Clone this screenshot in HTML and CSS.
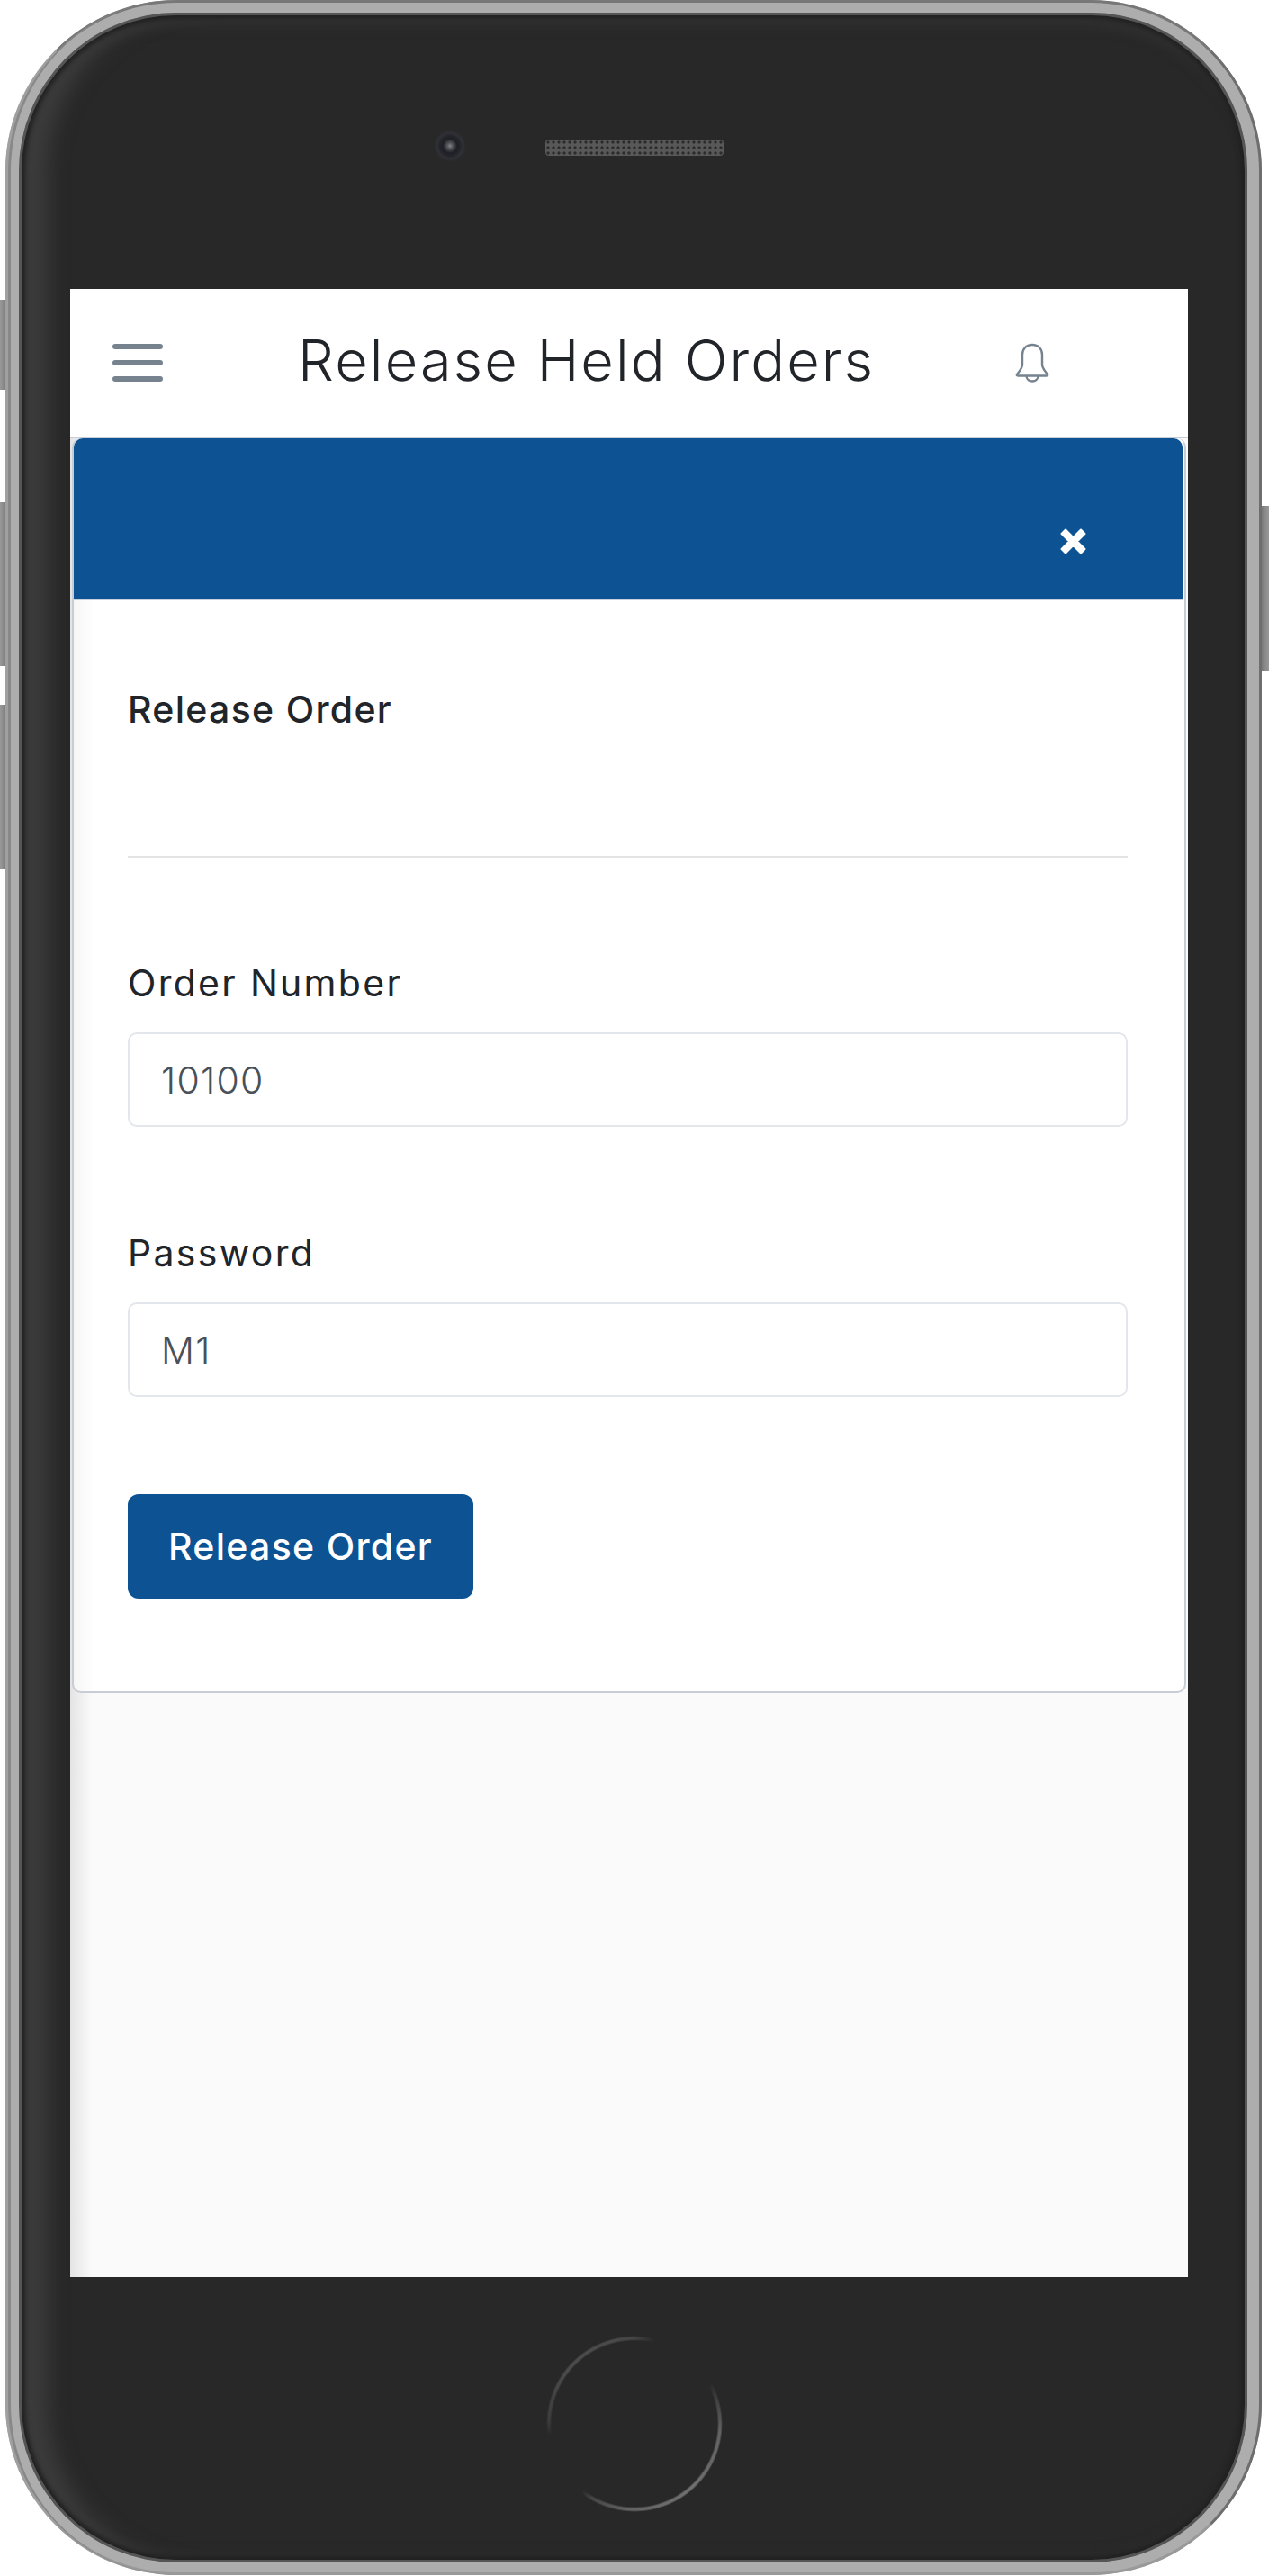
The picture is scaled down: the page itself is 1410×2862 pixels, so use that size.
FILE: index.html
```html
<!DOCTYPE html>
<html lang="en">

<head>
    <meta charset="UTF-8">
    <meta name="viewport" content="width=device-width, initial-scale=1.0">
    <title>Release Held Orders</title>
    <link rel="stylesheet" href="styles.css">
</head>

<body>
    <div class="phone">
        <span class="side-btn btn-a"></span>
        <span class="side-btn btn-b"></span>
        <span class="side-btn btn-c"></span>
        <span class="side-btn btn-d"></span>

        <div class="bezel">
            <div class="earpiece">
                <span class="camera"></span>
                <span class="speaker"></span>
            </div>

            <div class="screen">
                <header class="topbar">
                    <div class="menu-icon">
                        <span></span>
                        <span></span>
                        <span></span>
                    </div>
                    <h1>Release Held Orders</h1>
                    <svg class="bell" viewBox="0 0 38 44" width="38" height="44" fill="none" stroke="#76838f" stroke-width="2.4" stroke-linejoin="round">
                        <path d="M19 2c-7 0-11 5-11 11v11c0 4-3 7-6 11-.6 1 0 1.500 1 1.500h32c1 0 1.600-.5 1-1.500-3-4-6-7-6-11V13c0-6-4-11-11-11z" />
                        <path d="M12.500 36.500c0 3.800 2.800 6 6.500 6s6.500-2.200 6.500-6" />
                    </svg>
                </header>

                <div class="card">
                    <div class="card-head">
                        <svg class="close" viewBox="0 0 29 29" width="29" height="29">
                            <path d="M6 1.500L14.500 10L23 1.500L27.500 6L19 14.500L27.500 23L23 27.500L14.500 19L6 27.500L1.500 23L10 14.500L1.500 6Z" fill="#fff" stroke="#fff" stroke-width="2" stroke-linejoin="round" />
                        </svg>
                    </div>
                    <div class="card-body">
                        <h2>Release Order</h2>
                        <hr>
                        <form>
                            <label for="orderNumber">Order Number</label>
                            <input type="text" id="orderNumber" value="10100">
                            <label for="password" class="second">Password</label>
                            <input type="text" id="password" value="M1">
                            <button type="button">Release Order</button>
                        </form>
                    </div>
                </div>
            </div>

            <div class="home-btn"></div>
        </div>
    </div>
</body>

</html>
```

FILE: styles.css
```css
html,
body {
    margin: 0;
    background-color: #fff;
}

body {
    font-family: 'Inter', 'Open Sans', sans-serif;
    color: #212529;
}

.phone {
    position: relative;
    width: 1410px;
    height: 2862px;
    padding: 0 8px 1px 6px;
    box-sizing: border-box;
}

.bezel {
    position: relative;
    height: 100%;
    box-sizing: border-box;
    display: flex;
    flex-direction: column;
    align-items: flex-start;
    background-color: #282828;
    border-style: solid;
    border-color: #adadad;
    border-width: 14px 16px 14px 15px;
    border-radius: 190px;
    box-shadow:
        inset 0 0 0 3px #555,
        inset 0 0 5px 7px #212121,
        inset 42px 0 22px -10px #3c3c3c,
        inset 0 22px 14px -8px #343434,
        inset 0 -18px 12px -8px #2f2f2f;
}

/* outer edge of the metal frame */
.bezel::before {
    content: "";
    position: absolute;
    top: -14px;
    right: -16px;
    bottom: -14px;
    left: -15px;
    border-style: solid;
    border-width: 3px;
    border-color: #777 #6e6e6e #999 #a0a0a0;
    border-radius: 190px;
    pointer-events: none;
}

.bezel::after {
    content: "";
    position: absolute;
    top: -14px;
    right: -16px;
    bottom: -14px;
    left: -12px;
    border-left: 3px solid #888;
    border-radius: 190px;
    pointer-events: none;
}

.earpiece {
    height: 307px;
    flex-shrink: 0;
    position: relative;
    width: 100%;
}

.camera {
    position: absolute;
    left: 461px;
    top: 130px;
    width: 36px;
    height: 36px;
    border-radius: 50%;
    background: radial-gradient(circle, #85858d 0, #55555c 3px, #1e1e24 8px, #26262d 12px, #303037 14px, #282828 18px);
}

.speaker {
    position: absolute;
    left: 585px;
    top: 141px;
    width: 198px;
    height: 18px;
    border-radius: 4px;
    background-color: #585858;
    background-image: radial-gradient(#2c2c2c 35%, transparent 40%);
    background-size: 6px 6px;
}

.screen {
    width: 1242px;
    height: 2209px;
    flex-shrink: 0;
    margin-left: 57px;
    background: linear-gradient(to right, #e4e4e4, #fafafa 24px);
    z-index: 1;
}

.topbar {
    height: 166px;
    display: flex;
    align-items: center;
    background-color: #fff;
    box-sizing: border-box;
    padding: 0 0 0 47px;
    border-bottom: 2px solid #c8ccd4;
}

.menu-icon {
    width: 56px;
    display: flex;
    flex-direction: column;
    gap: 12px;
}

.menu-icon span {
    display: block;
    height: 6px;
    border-radius: 3px;
    background-color: #76838f;
}

.topbar h1 {
    margin: 0 0 6px 150px;
    width: 797px;
    font-size: 63px;
    font-weight: 300;
    letter-spacing: 2.1px;
    white-space: nowrap;
}

.card {
    margin: 0 2px;
    background: linear-gradient(to right, #f6f6f6, #fff 24px);
    border: 2px solid #c8ccd4;
    border-top: 0;
    border-radius: 10px;
    height: 1394px;
    box-sizing: border-box;
}

.card-head {
    height: 180px;
    margin-right: 2px;
    background-color: #0d5394;
    border-bottom: 2px solid #c8d0dc;
    border-radius: 10px 10px 0 0;
    box-sizing: border-box;
    display: flex;
    justify-content: flex-end;
    align-items: flex-start;
    padding: 100px 107px 0 0;
}

.card-body {
    padding: 0 63px 0 60px;
}

.card-body h2 {
    margin: 0;
    padding-top: 97px;
    font-size: 41px;
    font-weight: 500;
    letter-spacing: 1.3px;
    line-height: 48px;
}

.card-body hr {
    margin: 139px 0 0;
    border: 0;
    border-top: 2px solid #e3e3e3;
}

.card-body form {
    display: flex;
    flex-direction: column;
    align-items: flex-start;
    padding-top: 115px;
}

.card-body label {
    font-size: 41px;
    font-weight: 400;
    letter-spacing: 2.3px;
    line-height: 48px;
}

.card-body label.second {
    margin-top: 116px;
}

.card-body input {
    width: 100%;
    height: 105px;
    box-sizing: border-box;
    margin-top: 31px;
    padding: 0 35px;
    border: 2px solid #e3e6ea;
    border-radius: 10px;
    background-color: #fff;
    font-family: inherit;
    font-size: 41px;
    font-weight: 300;
    letter-spacing: 1.3px;
    color: #495057;
}

.card-body button {
    margin-top: 108px;
    width: 384px;
    height: 116px;
    border: none;
    border-radius: 12px;
    background-color: #0d5394;
    color: #fff;
    font-family: inherit;
    font-size: 41px;
    font-weight: 500;
    letter-spacing: 1.3px;
}

.home-btn {
    width: 196px;
    height: 196px;
    flex-shrink: 0;
    margin-top: 65px;
    margin-left: 586px;
    border-radius: 50%;
    background: conic-gradient(#444 0deg, #333 8deg, transparent 14deg, transparent 62deg, #3a3a3a 70deg, #626262 95deg, #707070 140deg, #626262 185deg, #444 210deg, transparent 218deg, transparent 262deg, #3c3c3c 272deg, #4c4c4c 310deg, #4a4a4a 345deg, #444 360deg);
    -webkit-mask: radial-gradient(circle, transparent 92px, #000 94px, #000 96px, transparent 98px);
    mask: radial-gradient(circle, transparent 92px, #000 94px, #000 96px, transparent 98px);
}

.side-btn {
    position: absolute;
    width: 7px;
    background: linear-gradient(to right, #999, #7c7c7c);
}

.btn-a {
    left: 0;
    top: 333px;
    height: 100px;
}

.btn-b {
    left: 0;
    top: 558px;
    height: 182px;
}

.btn-c {
    left: 0;
    top: 783px;
    height: 183px;
}

.btn-d {
    right: 0;
    top: 562px;
    width: 9px;
    height: 183px;
    background: linear-gradient(to right, #777, #999);
}
```
